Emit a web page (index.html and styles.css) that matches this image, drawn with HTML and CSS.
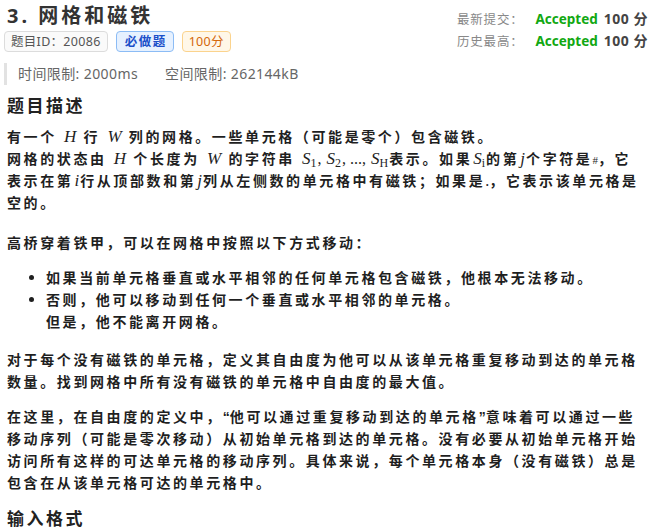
FILE: index.html
```html
<!DOCTYPE html>
<html>
<head>
    <title>网格和磁铁</title>
    <link rel="stylesheet" href="styles.css">
</head>
<body>
    <div class="page">
        <div class="header">
            <div class="header-left">
                <h1 class="title">3. 网格和磁铁</h1>
                <div class="tags">
                    <span class="tag tag-id">题目ID：20086</span>
                    <span class="tag tag-must">必做题</span>
                    <span class="tag tag-score">100分</span>
                </div>
            </div>
            <div class="status">
                <div class="status-row">
                    <span class="status-label">最新提交：</span>
                    <span class="accepted">Accepted</span>
                    <span class="score">100 分</span>
                </div>
                <div class="status-row">
                    <span class="status-label">历史最高：</span>
                    <span class="accepted">Accepted</span>
                    <span class="score">100 分</span>
                </div>
            </div>
        </div>

        <div class="limits">
            <span>时间限制: 2000ms</span>
            <span>空间限制: 262144kB</span>
        </div>

        <h2 class="section-title">题目描述</h2>
        <div class="content">
            <p class="first">有一个 <i class="m">H</i> 行 <i class="m">W</i> 列的网格。一些单元格（可能是零个）包含磁铁。<br>
            网格的状态由 <i class="m">H</i> 个长度为 <i class="m">W</i> 的字符串 <span class="mr"><i class="m">S<sub>1</sub></i>, <i class="m">S<sub>2</sub></i>, ..., <i class="m">S<sub>H</sub></i></span>表示。如果<i class="m">S<sub>i</sub></i>的第<i class="m">j</i>个字符是<span class="mr sm">#</span>，它表示在第<i class="m">i</i>行从顶部数和第<i class="m">j</i>列从左侧数的单元格中有磁铁；如果是<span class="mr">.</span>，它表示该单元格是空的。</p>

            <p>高桥穿着铁甲，可以在网格中按照以下方式移动：</p>

            <ul class="moves">
                <li>如果当前单元格垂直或水平相邻的任何单元格包含磁铁，他根本无法移动。</li>
                <li>否则，他可以移动到任何一个垂直或水平相邻的单元格。<br>但是，他不能离开网格。</li>
            </ul>

            <p>对于每个没有磁铁的单元格，定义其自由度为他可以从该单元格重复移动到达的单元格数量。找到网格中所有没有磁铁的单元格中自由度的最大值。</p>

            <p>在这里，在自由度的定义中，<span class="q">“</span>他可以通过重复移动到达的单元格<span class="q">”</span>意味着可以通过一些移动序列（可能是零次移动）从初始单元格到达的单元格。没有必要从初始单元格开始访问所有这样的可达单元格的移动序列。具体来说，每个单元格本身（没有磁铁）总是包含在从该单元格可达的单元格中。</p>
        </div>

        <h2 class="section-title">输入格式</h2>
        <div class="divider"></div>
    </div>
</body>
</html>
```

FILE: styles.css
```css
body {
    margin: 0;
    padding: 0;
    background-color: #ffffff;
    font-family: "Noto Sans", "Noto Sans CJK SC", sans-serif;
    color: #262626;
}

.page {
    padding: 0 7px;
}

.header {
    display: flex;
    justify-content: space-between;
    align-items: flex-start;
}

.title {
    margin: 3px 0 0;
    font-size: 20px;
    line-height: 26px;
    font-weight: bold;
    letter-spacing: 3px;
    color: #333;
}

.tags {
    display: flex;
    gap: 8px;
    margin: 2px 0 0 -3px;
}

.tag {
    display: inline-block;
    height: 19px;
    line-height: 19px;
    padding: 0 6px;
    border: 1px solid #dcdcdc;
    border-radius: 4px;
    font-size: 12.5px;
    letter-spacing: 0.3px;
}

.tag-id {
    background-color: #fafafa;
    color: #555;
}

.tag-must {
    background-color: #e6f1ff;
    border-color: #8cbcf5;
    color: #1a4fc9;
    font-weight: bold;
    letter-spacing: 1.5px;
    padding: 0 6px 0 8px;
}

.tag-score {
    background-color: #fff7e8;
    border-color: #fbd38d;
    color: #d4670a;
}

.status {
    margin-top: 8px;
    margin-right: -4px;
}

.status-row {
    display: flex;
    align-items: baseline;
    height: 22px;
    justify-content: flex-end;
}

.status-label {
    color: #888;
    font-size: 12.5px;
    letter-spacing: 0.8px;
    margin-right: 12px;
}

.accepted {
    color: #12a812;
    font-weight: bold;
    font-size: 13.5px;
    margin-right: 6px;
}

.score {
    color: #444;
    font-weight: bold;
    font-size: 14px;
    letter-spacing: 0.5px;
}

.limits {
    margin: 11px 0 0 -3px;
    padding: 0 0 0 11px;
    border-left: 3px solid #e2e2e2;
    height: 22px;
    line-height: 22px;
    display: flex;
    gap: 27px;
    color: #666;
    font-size: 14px;
    letter-spacing: 0.4px;
}

.section-title {
    margin: 9px 0 8px;
    font-size: 17px;
    line-height: 24px;
    font-weight: bold;
    letter-spacing: 2.5px;
    color: #222;
}

.content {
    font-size: 14px;
    line-height: 22px;
    font-weight: bold;
    letter-spacing: 2.6px;
    color: #1f1f1f;
}

.content p {
    margin: 0 0 13px;
}

.content p.first {
    margin-bottom: 18px;
}

.moves {
    margin: 12px 0 16px;
    padding-left: 39px;
}

.m {
    font-family: "Liberation Serif", "DejaVu Serif", serif;
    font-weight: normal;
    font-size: 17px;
    line-height: 1;
    letter-spacing: 0;
    padding: 0 1px;
}

.m sub {
    font-style: normal;
    font-size: 12px;
    vertical-align: -3px;
    line-height: 1;
}

.mr {
    font-family: "Liberation Serif", serif;
    font-weight: normal;
    line-height: 1;
    letter-spacing: 0;
    font-size: 16px;
}

.sm {
    font-size: 11px;
}

.q {
    font-family: "Liberation Sans", sans-serif;
    letter-spacing: 0;
}

.divider {
    margin: 1px -7px 0;
    border-top: 2px solid #e4e4e4;
}
```
